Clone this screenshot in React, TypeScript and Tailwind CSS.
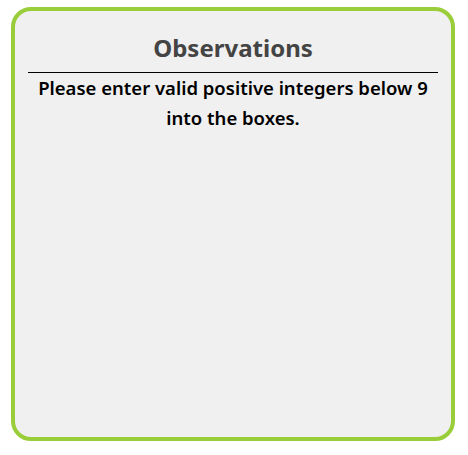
export default function App() {
  return (
    <div className="w-[468px] h-[455px] bg-white pl-[11px] pt-[7px]" style={{ fontFamily: '"Noto Sans", sans-serif' }}>
      <div className="w-[444px] h-[434px] border-4 border-[#9acd3a] rounded-[20px] bg-[#f0f0f0] px-[13px] pt-[22px]">
        <h2 className="text-center text-[24px] font-bold leading-[30px] text-[#444444]">Observations</h2>
        <hr className="mt-[9px] border-t border-black" />
        <p className="text-center text-[18.5px] font-semibold leading-[30px] text-black">
          Please enter valid positive integers below 9 into the boxes.
        </p>
      </div>
    </div>
  );
}
